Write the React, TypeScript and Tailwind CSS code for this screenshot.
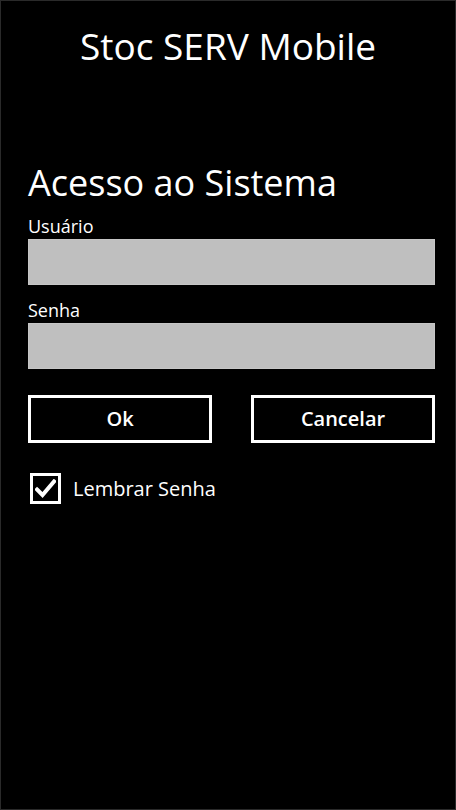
const font = { fontFamily: '"Open Sans", "Noto Sans", sans-serif' };

function Field({ label }: { label: string }) {
  return (
    <div className="mt-[16px]">
      <div className="text-[18px] leading-[18px] text-white">{label}</div>
      <div className="mt-[4px] h-[46px] w-[407px] border border-[#c6c6c6] bg-[#bfbfbf]" />
    </div>
  );
}

export default function App() {
  return (
    <div
      className="h-[810px] w-[456px] overflow-hidden border border-[#2a2a2a] bg-black text-white"
      style={font}
    >
      <h1 className="mt-[26px] text-center text-[37px] leading-[37px] font-normal">
        Stoc SERV Mobile
      </h1>

      <div className="pl-[27px]">
        <h2 className="mt-[101px] text-[36px] leading-[36px] font-normal">Acesso ao Sistema</h2>

        <Field label="Usuário" />
        <Field label="Senha" />

        <div className="mt-[26px] flex w-[407px] justify-between">
          <button className="h-[48px] w-[184px] border-[3px] border-white text-[20px] font-semibold text-white">
            Ok
          </button>
          <button className="h-[48px] w-[184px] border-[3px] border-white text-[20px] font-semibold text-white">
            Cancelar
          </button>
        </div>

        <label className="mt-[30px] ml-[2px] flex items-center gap-[12px]">
          <span className="flex h-[31px] w-[31px] items-center justify-center border-[3px] border-white">
            <svg width="21" height="19" viewBox="0 0 21 19" fill="none">
              <path
                d="M2 10.5 L7.5 16 L19 2.5"
                stroke="white"
                strokeWidth="4"
                strokeLinecap="square"
              />
            </svg>
          </span>
          <span className="text-[20px] leading-[20px]">Lembrar Senha</span>
        </label>
      </div>
    </div>
  );
}
